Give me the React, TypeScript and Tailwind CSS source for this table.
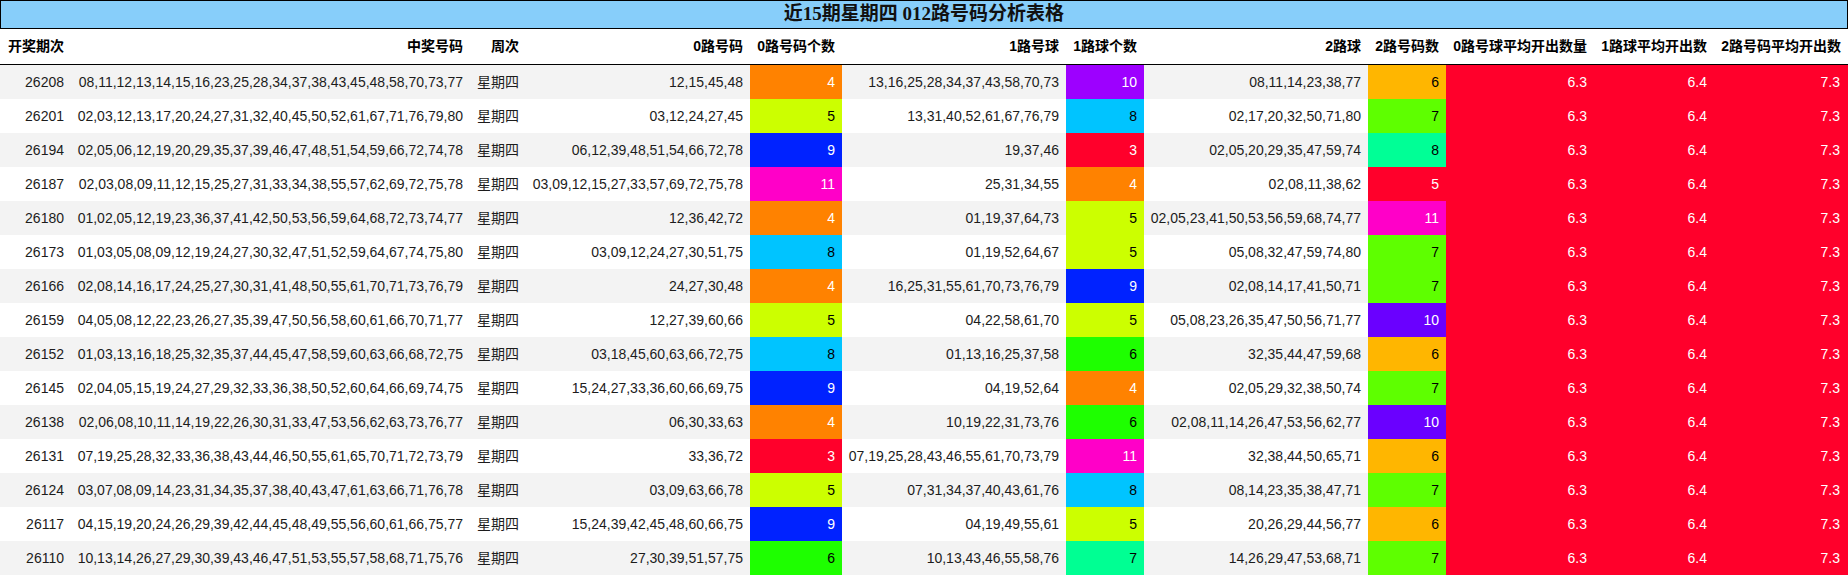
const cols =
  "grid grid-cols-[71px_399px_56px_224px_92px_224px_78px_224px_78px_148px_120px_134px]";

type Row = {
  id: string;
  nums: string;
  z: string;
  zc: number;
  o: string;
  oc: number;
  t: string;
  tc: number;
};

const rows: Row[] = [
  { id: "26208", nums: "08,11,12,13,14,15,16,23,25,28,34,37,38,43,45,48,58,70,73,77", z: "12,15,45,48", zc: 4, o: "13,16,25,28,34,37,43,58,70,73", oc: 10, t: "08,11,14,23,38,77", tc: 6 },
  { id: "26201", nums: "02,03,12,13,17,20,24,27,31,32,40,45,50,52,61,67,71,76,79,80", z: "03,12,24,27,45", zc: 5, o: "13,31,40,52,61,67,76,79", oc: 8, t: "02,17,20,32,50,71,80", tc: 7 },
  { id: "26194", nums: "02,05,06,12,19,20,29,35,37,39,46,47,48,51,54,59,66,72,74,78", z: "06,12,39,48,51,54,66,72,78", zc: 9, o: "19,37,46", oc: 3, t: "02,05,20,29,35,47,59,74", tc: 8 },
  { id: "26187", nums: "02,03,08,09,11,12,15,25,27,31,33,34,38,55,57,62,69,72,75,78", z: "03,09,12,15,27,33,57,69,72,75,78", zc: 11, o: "25,31,34,55", oc: 4, t: "02,08,11,38,62", tc: 5 },
  { id: "26180", nums: "01,02,05,12,19,23,36,37,41,42,50,53,56,59,64,68,72,73,74,77", z: "12,36,42,72", zc: 4, o: "01,19,37,64,73", oc: 5, t: "02,05,23,41,50,53,56,59,68,74,77", tc: 11 },
  { id: "26173", nums: "01,03,05,08,09,12,19,24,27,30,32,47,51,52,59,64,67,74,75,80", z: "03,09,12,24,27,30,51,75", zc: 8, o: "01,19,52,64,67", oc: 5, t: "05,08,32,47,59,74,80", tc: 7 },
  { id: "26166", nums: "02,08,14,16,17,24,25,27,30,31,41,48,50,55,61,70,71,73,76,79", z: "24,27,30,48", zc: 4, o: "16,25,31,55,61,70,73,76,79", oc: 9, t: "02,08,14,17,41,50,71", tc: 7 },
  { id: "26159", nums: "04,05,08,12,22,23,26,27,35,39,47,50,56,58,60,61,66,70,71,77", z: "12,27,39,60,66", zc: 5, o: "04,22,58,61,70", oc: 5, t: "05,08,23,26,35,47,50,56,71,77", tc: 10 },
  { id: "26152", nums: "01,03,13,16,18,25,32,35,37,44,45,47,58,59,60,63,66,68,72,75", z: "03,18,45,60,63,66,72,75", zc: 8, o: "01,13,16,25,37,58", oc: 6, t: "32,35,44,47,59,68", tc: 6 },
  { id: "26145", nums: "02,04,05,15,19,24,27,29,32,33,36,38,50,52,60,64,66,69,74,75", z: "15,24,27,33,36,60,66,69,75", zc: 9, o: "04,19,52,64", oc: 4, t: "02,05,29,32,38,50,74", tc: 7 },
  { id: "26138", nums: "02,06,08,10,11,14,19,22,26,30,31,33,47,53,56,62,63,73,76,77", z: "06,30,33,63", zc: 4, o: "10,19,22,31,73,76", oc: 6, t: "02,08,11,14,26,47,53,56,62,77", tc: 10 },
  { id: "26131", nums: "07,19,25,28,32,33,36,38,43,44,46,50,55,61,65,70,71,72,73,79", z: "33,36,72", zc: 3, o: "07,19,25,28,43,46,55,61,70,73,79", oc: 11, t: "32,38,44,50,65,71", tc: 6 },
  { id: "26124", nums: "03,07,08,09,14,23,31,34,35,37,38,40,43,47,61,63,66,71,76,78", z: "03,09,63,66,78", zc: 5, o: "07,31,34,37,40,43,61,76", oc: 8, t: "08,14,23,35,38,47,71", tc: 7 },
  { id: "26117", nums: "04,15,19,20,24,26,29,39,42,44,45,48,49,55,56,60,61,66,75,77", z: "15,24,39,42,45,48,60,66,75", zc: 9, o: "04,19,49,55,61", oc: 5, t: "20,26,29,44,56,77", tc: 6 },
  { id: "26110", nums: "10,13,14,26,27,29,30,39,43,46,47,51,53,55,57,58,68,71,75,76", z: "27,30,39,51,57,75", zc: 6, o: "10,13,43,46,55,58,76", oc: 7, t: "14,26,29,47,53,68,71", tc: 7 },
];

// colour scale for 0路 / 1路 counts (3..11)
const scaleA: Record<number, string> = {
  3: "bg-[#ff002b] text-white",
  4: "bg-[#ff8200] text-white",
  5: "bg-[#ccff00] text-black",
  6: "bg-[#1eff00] text-black",
  7: "bg-[#00ff93] text-black",
  8: "bg-[#00c4ff] text-black",
  9: "bg-[#0022ff] text-white",
  10: "bg-[#9d00ff] text-white",
  11: "bg-[#ff00c8] text-white",
};

// colour scale for 2路 counts (5..11)
const scaleB: Record<number, string> = {
  5: "bg-[#ff002b] text-white",
  6: "bg-[#ffb600] text-black",
  7: "bg-[#5eff00] text-black",
  8: "bg-[#00ff96] text-black",
  10: "bg-[#6a00ff] text-white",
  11: "bg-[#ff00c8] text-white",
};

const heads = [
  "开奖期次",
  "中奖号码",
  "周次",
  "0路号码",
  "0路号码个数",
  "1路号球",
  "1路球个数",
  "2路球",
  "2路号码数",
  "0路号球平均开出数量",
  "1路球平均开出数",
  "2路号码平均开出数",
];

const cell = "flex items-center justify-end px-[7px] whitespace-nowrap";

export default function App() {
  return (
    <div className="w-[1848px] h-[576px] overflow-hidden bg-white text-[14px] text-[#1c1c1c] font-['Liberation_Sans','Noto_Sans_CJK_SC',sans-serif]">
      <div className="h-[29px] border border-black bg-[#87cefa] flex items-center justify-center">
        <span className="text-[19px] font-bold text-[#111] font-['Liberation_Serif','Noto_Sans_CJK_SC',serif]">
          近15期星期四 012路号码分析表格
        </span>
      </div>

      <div className={`${cols} h-[36px] border-b border-black font-bold text-black`}>
        {heads.map((h, i) => (
          <div key={h} className={`${cell} ${i === 0 ? "justify-center" : ""}`}>
            {h}
          </div>
        ))}
      </div>

      {rows.map((r, i) => (
        <div
          key={r.id}
          className={`${cols} h-[34px] ${i % 2 === 0 ? "bg-[#f3f3f3]" : "bg-white"}`}
        >
          <div className={cell}>{r.id}</div>
          <div className={cell}>{r.nums}</div>
          <div className={cell}>星期四</div>
          <div className={cell}>{r.z}</div>
          <div className={`${cell} ${scaleA[r.zc]}`}>{r.zc}</div>
          <div className={cell}>{r.o}</div>
          <div className={`${cell} ${scaleA[r.oc]}`}>{r.oc}</div>
          <div className={cell}>{r.t}</div>
          <div className={`${cell} ${scaleB[r.tc]}`}>{r.tc}</div>
          <div className={`${cell} bg-[#ff002b] text-white`}>6.3</div>
          <div className={`${cell} bg-[#ff002b] text-white`}>6.4</div>
          <div className={`${cell} bg-[#ff002b] text-white pr-[8px]`}>7.3</div>
        </div>
      ))}
    </div>
  );
}
